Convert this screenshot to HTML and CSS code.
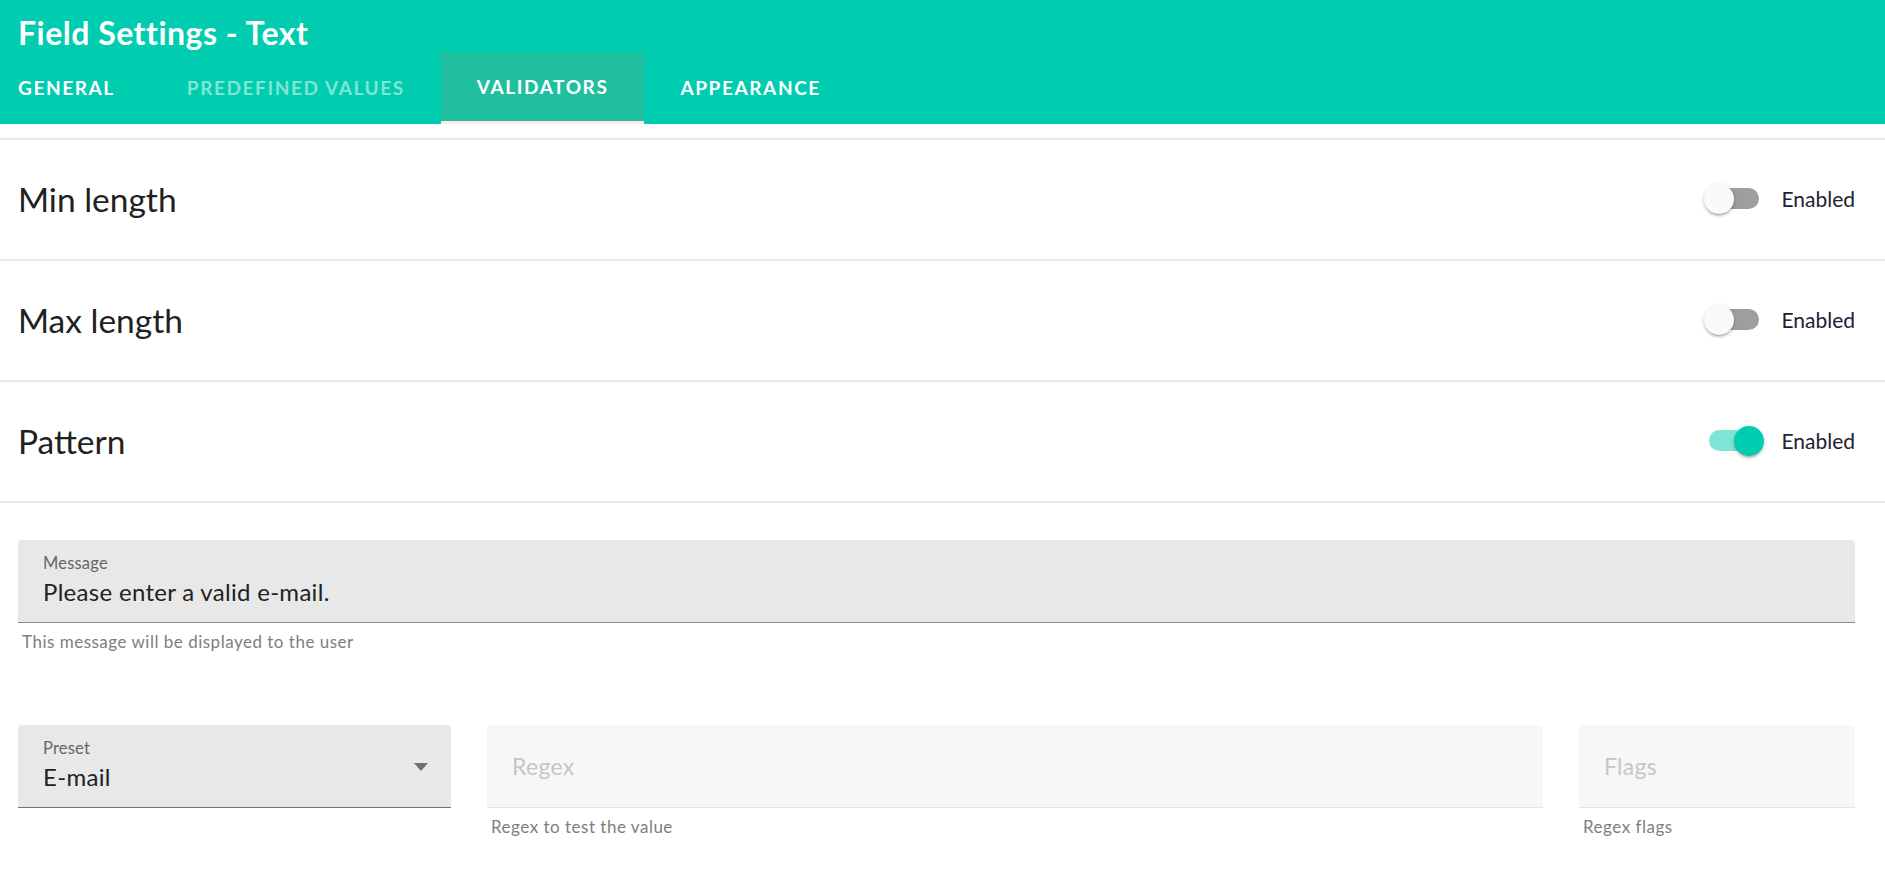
FILE: index.html
```html
<!DOCTYPE html>
<html lang="en">
<head>
<meta charset="utf-8">
<title>Field Settings - Text</title>
<link rel="stylesheet" href="styles.css">
</head>
<body>
<header class="app-header">
  <h1 class="title">Field Settings - Text</h1>
  <nav class="tabs">
    <div class="tab">General</div>
    <div class="tab tab-disabled">Predefined values</div>
    <div class="tab tab-active">Validators</div>
    <div class="tab">Appearance</div>
  </nav>
</header>

<main class="content">
  <section class="validator-list">
    <div class="validator-row">
      <span class="validator-name">Min length</span>
      <label class="toggle">
        <span class="switch"><span class="track"></span><span class="thumb"></span></span>
        <span class="toggle-text">Enabled</span>
      </label>
    </div>
    <div class="validator-row">
      <span class="validator-name">Max length</span>
      <label class="toggle">
        <span class="switch"><span class="track"></span><span class="thumb"></span></span>
        <span class="toggle-text">Enabled</span>
      </label>
    </div>
    <div class="validator-row">
      <span class="validator-name">Pattern</span>
      <label class="toggle toggle-on">
        <span class="switch"><span class="track"></span><span class="thumb"></span></span>
        <span class="toggle-text">Enabled</span>
      </label>
    </div>
  </section>

  <section class="pattern-settings">
    <div class="form-field">
      <div class="fill">
        <span class="field-label">Message</span>
        <span class="field-value">Please enter a valid e-mail.</span>
      </div>
      <div class="hint">This message will be displayed to the user</div>
    </div>

    <div class="field-grid">
      <div class="form-field">
        <div class="fill fill-select">
          <div class="select-text">
            <span class="field-label">Preset</span>
            <span class="field-value">E-mail</span>
          </div>
          <span class="arrow"></span>
        </div>
      </div>
      <div class="form-field">
        <div class="fill fill-empty">
          <span class="placeholder">Regex</span>
        </div>
        <div class="hint">Regex to test the value</div>
      </div>
      <div class="form-field">
        <div class="fill fill-empty">
          <span class="placeholder">Flags</span>
        </div>
        <div class="hint">Regex flags</div>
      </div>
    </div>
  </section>
</main>
</body>
</html>
```

FILE: styles.css
```css
* { box-sizing: border-box; }

html, body {
  margin: 0;
  padding: 0;
  background: #ffffff;
}

body {
  font-family: Lato, "Noto Sans", "Liberation Sans", sans-serif;
  color: #212121;
  width: 1885px;
  height: 880px;
  overflow: hidden;
}

/* Header */
.app-header {
  background: #00cdb0;
  height: 124px;
  color: #ffffff;
}

.title {
  margin: 0;
  padding: 14px 0 0 18px;
  height: 52px;
  font-size: 32px;
  line-height: 38px;
  font-weight: 700;
  letter-spacing: 0.5px;
}

.tabs {
  display: flex;
  height: 72px;
}

.tab {
  padding: 0 36px;
  height: 72px;
  line-height: 72px;
  font-size: 19px;
  font-weight: 700;
  letter-spacing: 1.6px;
  text-transform: uppercase;
  color: #ffffff;
}

.tab:first-child {
  padding-left: 18px;
}

.tab-disabled {
  color: rgba(255, 255, 255, 0.5);
}

.tab-active {
  background: #1fbf9f;
  border-bottom: 3px solid #fde9dd;
  line-height: 69px;
}

/* Validator rows */
.validator-list {
  padding-top: 14px;
}

.validator-row {
  display: flex;
  align-items: center;
  justify-content: space-between;
  height: 121px;
  padding: 0 30px 2px 18px;
  border-top: 2px solid #e9e9e9;
}

.validator-row:last-child {
  border-bottom: 2px solid #e9e9e9;
  height: 123px;
}

.validator-name {
  font-size: 33.5px;
  line-height: 40px;
}

.toggle {
  display: flex;
  align-items: center;
}

.switch {
  position: relative;
  width: 60px;
  height: 30px;
}

.track {
  position: absolute;
  left: 5px;
  right: 5px;
  top: 4.5px;
  height: 21px;
  border-radius: 11px;
  background: #9e9e9e;
}

.thumb {
  position: absolute;
  left: 0;
  top: 0;
  width: 30px;
  height: 30px;
  border-radius: 50%;
  background: #fafafa;
  box-shadow: 0 3px 2px -2px rgba(0,0,0,0.2), 0 2px 3px 0 rgba(0,0,0,0.14), 0 1px 5px 0 rgba(0,0,0,0.12);
}

.toggle-on .track {
  background: #7fe6d7;
}

.toggle-on .thumb {
  left: 30px;
  background: #00cdb0;
}

.toggle-text {
  margin-left: 17px;
  font-size: 21px;
  line-height: 24px;
  color: #212133;
}

/* Pattern settings */
.pattern-settings {
  padding: 37px 30px 0 18px;
}

.fill {
  height: 83px;
  background: #e8e8e8;
  border-radius: 4px 4px 0 0;
  border-bottom: 1px solid #8a8a8a;
  padding: 13px 25px 0 25px;
  display: flex;
  flex-direction: column;
}

.field-label {
  font-size: 16.5px;
  line-height: 20px;
  color: #666666;
  letter-spacing: 0.2px;
}

.field-value {
  margin-top: 4px;
  font-size: 24px;
  line-height: 29px;
  letter-spacing: 0.3px;
  color: #222222;
}

.hint {
  padding: 9px 0 0 4px;
  font-size: 17px;
  line-height: 20px;
  letter-spacing: 0.5px;
  color: #7b7f7f;
}

.field-grid {
  display: grid;
  grid-template-columns: 433px 1fr 276px;
  column-gap: 36px;
  margin-top: 73px;
}

.fill-select {
  flex-direction: row;
  justify-content: space-between;
  align-items: flex-start;
  border-bottom-color: #6f6f6f;
  padding-right: 23px;
}

.select-text {
  display: flex;
  flex-direction: column;
}

.arrow {
  margin-top: 25px;
  width: 0;
  height: 0;
  border-left: 7.5px solid transparent;
  border-right: 7.5px solid transparent;
  border-top: 8px solid #707070;
}

.fill-empty {
  background: #f7f7f7;
  border-bottom: 1px solid #e4e4e4;
  justify-content: center;
  padding-top: 0;
}

.placeholder {
  font-size: 23px;
  line-height: 28px;
  letter-spacing: 0.3px;
  color: #c6c6c6;
}
```
